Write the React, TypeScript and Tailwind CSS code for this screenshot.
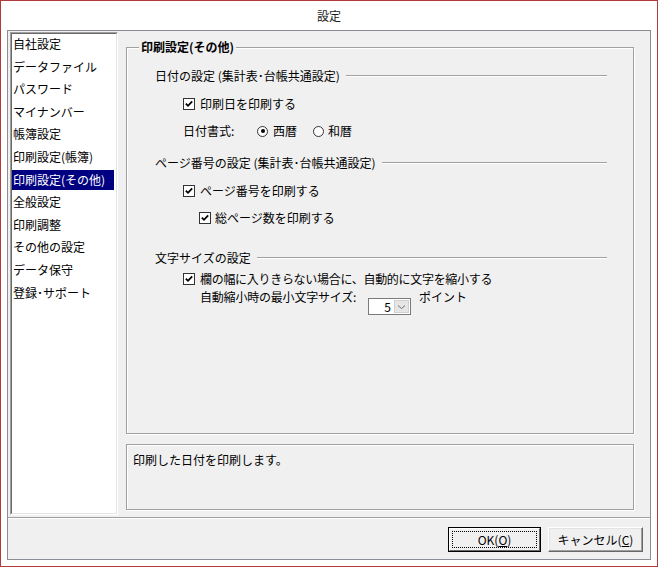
import React from "react";

const items = [
  "自社設定",
  "データファイル",
  "パスワード",
  "マイナンバー",
  "帳簿設定",
  "印刷設定(帳簿)",
  "印刷設定(その他)",
  "全般設定",
  "印刷調整",
  "その他の設定",
  "データ保守",
  "登録･サポート",
];

function CheckBox() {
  return (
    <div className="w-[12px] h-[12px] border border-[#333333] bg-white flex items-center justify-center shrink-0">
      <svg width="10" height="10" viewBox="0 0 10 10">
        <polyline points="1.8,4.6 4,6.8 8.2,2.4" fill="none" stroke="#000" strokeWidth="1.8" />
      </svg>
    </div>
  );
}

function Radio({ on }: { on: boolean }) {
  return (
    <div className="w-[11px] h-[11px] rounded-full border border-[#333333] bg-white flex items-center justify-center shrink-0">
      {on && <div className="w-[4px] h-[4px] rounded-full bg-black" />}
    </div>
  );
}

function SectionHeader({ text }: { text: string }) {
  return (
    <div className="flex items-center h-[14px] mr-[26px]">
      <span className="leading-[14px] whitespace-nowrap">{text}</span>
      <div className="flex-1 ml-[6px] border-t border-t-[#a0a0a0] border-b border-b-white" />
    </div>
  );
}

export default function App() {
  return (
    <div className="w-[658px] h-[567px] bg-white border border-[#b23a3a] flex flex-col font-['Noto_Sans_CJK_JP',sans-serif] text-[12px] text-black">
      <div className="h-[29px] flex items-center justify-center text-[12px] text-[#1a1a1a]">設定</div>
      <div className="ml-[6px] w-[644px] h-[530px] border border-[#898d94] bg-[#f0f0f0] flex flex-col">
        <div className="h-[486px] flex">
          {/* list */}
          <div className="ml-[2px] mt-[1px] w-[108px] h-[483px] border border-t-[#a0a0a0] border-l-[#a0a0a0] border-r-white border-b-white">
            <div className="w-full h-full border border-t-[#696969] border-l-[#696969] border-r-[#e3e3e3] border-b-[#e3e3e3] bg-white flex flex-col">
              {items.map((it, i) => (
                <div key={it} className="h-[22.6px] shrink-0 mr-[2px]">
                  <div
                    className={
                      i === 6
                        ? "h-[20px] flex items-center pl-[1px] bg-[#000080] text-white leading-[14px] whitespace-nowrap"
                        : "h-[20px] flex items-center pl-[1px] leading-[14px] whitespace-nowrap"
                    }
                  >
                    {it}
                  </div>
                </div>
              ))}
            </div>
          </div>
          {/* right column */}
          <div className="ml-[8px] w-[508px] flex flex-col">
            <div className="mt-[16px] h-[387px] relative border border-[#a0a0a0] shadow-[inset_1px_1px_0_#ffffff,1px_1px_0_#ffffff]">
              <div className="absolute top-[-8px] left-[12px] px-[2px] bg-[#f0f0f0] font-bold leading-[14px] whitespace-nowrap">
                印刷設定(その他)
              </div>
              <div className="flex flex-col pl-[28px]">
                <div className="mt-[21px]">
                  <SectionHeader text="日付の設定 (集計表･台帳共通設定)" />
                </div>
                <div className="mt-[14px] ml-[28px] h-[14px] flex items-center gap-[5px]">
                  <CheckBox />
                  <span className="leading-[14px]">印刷日を印刷する</span>
                </div>
                <div className="mt-[13px] ml-[28px] h-[14px] flex items-center">
                  <span className="w-[74px] leading-[14px]">日付書式:</span>
                  <Radio on={true} />
                  <span className="ml-[5px] leading-[14px]">西暦</span>
                  <div className="ml-[16px]">
                    <Radio on={false} />
                  </div>
                  <span className="ml-[4px] leading-[14px]">和暦</span>
                </div>
                <div className="mt-[18px]">
                  <SectionHeader text="ページ番号の設定 (集計表･台帳共通設定)" />
                </div>
                <div className="mt-[14px] ml-[28px] h-[14px] flex items-center gap-[5px]">
                  <CheckBox />
                  <span className="leading-[14px]">ページ番号を印刷する</span>
                </div>
                <div className="mt-[13px] ml-[44px] h-[14px] flex items-center gap-[4px]">
                  <CheckBox />
                  <span className="leading-[14px]">総ページ数を印刷する</span>
                </div>
                <div className="mt-[26px]">
                  <SectionHeader text="文字サイズの設定" />
                </div>
                <div className="mt-[7px] ml-[28px] h-[14px] flex items-center gap-[5px]">
                  <CheckBox />
                  <span className="leading-[14px] whitespace-nowrap tracking-[-0.3px]">
                    欄の幅に入りきらない場合に、自動的に文字を縮小する
                  </span>
                </div>
                <div className="mt-[4px] ml-[45px] flex items-start">
                  <span className="w-[168px] leading-[14px] whitespace-nowrap tracking-[-0.2px]">自動縮小時の最小文字サイズ:</span>
                  <div className="mt-[8px] w-[43px] h-[17px] border border-[#7a7a7a] bg-white flex">
                    <div className="flex-1 flex items-center justify-end pr-[2px] leading-[14px]">5</div>
                    <div className="m-[1px] w-[15px] bg-[#e6e6e6] border border-[#d0d0d0] flex items-center justify-center">
                      <svg width="9" height="6" viewBox="0 0 9 6">
                        <polyline points="1,1.5 4.5,4.5 8,1.5" fill="none" stroke="#707070" strokeWidth="1" />
                      </svg>
                    </div>
                  </div>
                  <span className="ml-[8px] leading-[14px] whitespace-nowrap">ポイント</span>
                </div>
              </div>
            </div>
            <div className="mt-[10px] h-[66px] border border-[#a0a0a0] shadow-[inset_1px_1px_0_#ffffff,1px_1px_0_#ffffff] pl-[6px] pt-[6px]">
              <span className="leading-[14px]">印刷した日付を印刷します。</span>
            </div>
          </div>
        </div>
        <div className="h-[2px] border-t border-t-[#a0a0a0] border-b border-b-white" />
        <div className="flex justify-end gap-[7px] pr-[7px] pt-[8px]">
          <div className="w-[93px] h-[25px] border border-black">
            <div className="w-full h-full border border-t-white border-l-white border-r-[#696969] border-b-[#696969] bg-[#f0f0f0] p-[2px]">
              <div className="w-full h-full border border-dotted border-black flex items-center justify-center leading-[14px]">
                OK(<span className="underline">O</span>)
              </div>
            </div>
          </div>
          <div className="w-[95px] h-[25px] border border-t-white border-l-white border-r-[#696969] border-b-[#696969] shadow-[inset_-1px_-1px_0_#a0a0a0,inset_1px_1px_0_#e3e3e3] bg-[#f0f0f0] flex items-center justify-center leading-[14px]">
            キャンセル(<span className="underline">C</span>)
          </div>
        </div>
      </div>
    </div>
  );
}
